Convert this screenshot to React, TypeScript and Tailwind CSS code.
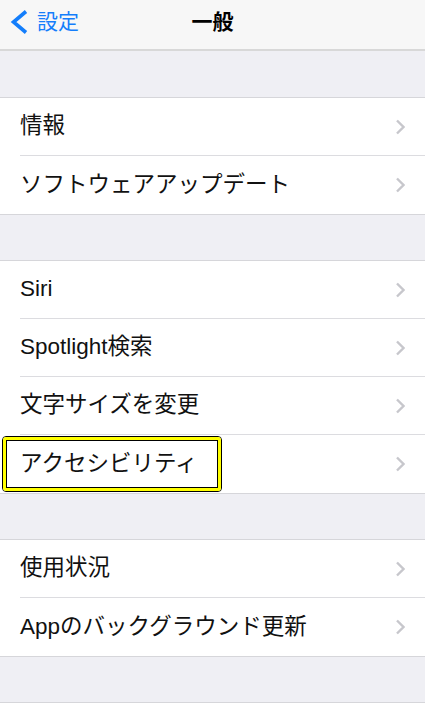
import React from 'react';

const font = { fontFamily: '"Liberation Sans", "Noto Sans CJK JP", sans-serif' };

type Row = { label: string; highlight?: boolean };

const groups: Row[][] = [
  [{ label: '情報' }, { label: 'ソフトウェアアップデート' }],
  [
    { label: 'Siri' },
    { label: 'Spotlight検索' },
    { label: '文字サイズを変更' },
    { label: 'アクセシビリティ', highlight: true },
  ],
  [{ label: '使用状況' }, { label: 'Appのバックグラウンド更新' }],
];

const Chevron = () => (
  <svg width="10" height="16" viewBox="0 0 10 16" className="shrink-0">
    <polyline points="2,1.5 8.5,8 2,14.5" fill="none" stroke="#c7c7cc" strokeWidth="2.4" />
  </svg>
);

const Group: React.FC<{ rows: Row[] }> = ({ rows }) => (
  <div className="bg-white border-y border-[#d6d6da]">
    {rows.map((row, i) => (
      <div key={row.label} className="relative pl-[20px]">
        <div
          className={
            'flex items-center justify-between h-[58px] pr-[20px] ' +
            (i < rows.length - 1 ? 'border-b border-[#dcdce0]' : '')
          }
        >
          <span className="text-[22.5px] text-[#111] leading-none">{row.label}</span>
          <Chevron />
        </div>
        {row.highlight && (
          <div className="absolute left-[2px] top-[1px] w-[220px] h-[56px] rounded-[4px] border border-black">
            <div className="w-full h-full rounded-[3px] border-[3px] border-[#ffff00]">
              <div className="w-full h-full border border-black" />
            </div>
          </div>
        )}
      </div>
    ))}
  </div>
);

export default function App() {
  return (
    <div className="w-[425px] h-[720px] bg-[#efeff4] overflow-hidden" style={font}>
      <div className="relative h-[51px] bg-[#f7f7f7] border-b-2 border-[#d8d8d8] flex items-center justify-center pb-[6px]">
        <div className="absolute left-[9px] top-0 h-full flex items-center gap-[8px] pb-[6px]">
          <svg width="20" height="24" viewBox="0 0 20 24">
            <polyline points="17,1.5 4.5,12 17,22.5" fill="none" stroke="#147efb" strokeWidth="3.6" />
          </svg>
          <span className="text-[21px] text-[#147efb] leading-none">設定</span>
        </div>
        <span className="text-[21px] font-bold text-black leading-none">一般</span>
      </div>
      <div className="h-[46px]" />
      <Group rows={groups[0]} />
      <div className="h-[45px]" />
      <Group rows={groups[1]} />
      <div className="h-[45px]" />
      <Group rows={groups[2]} />
      <div className="h-[45px]" />
      <div className="border-t border-[#d6d6da] bg-white h-[20px]" />
    </div>
  );
}
